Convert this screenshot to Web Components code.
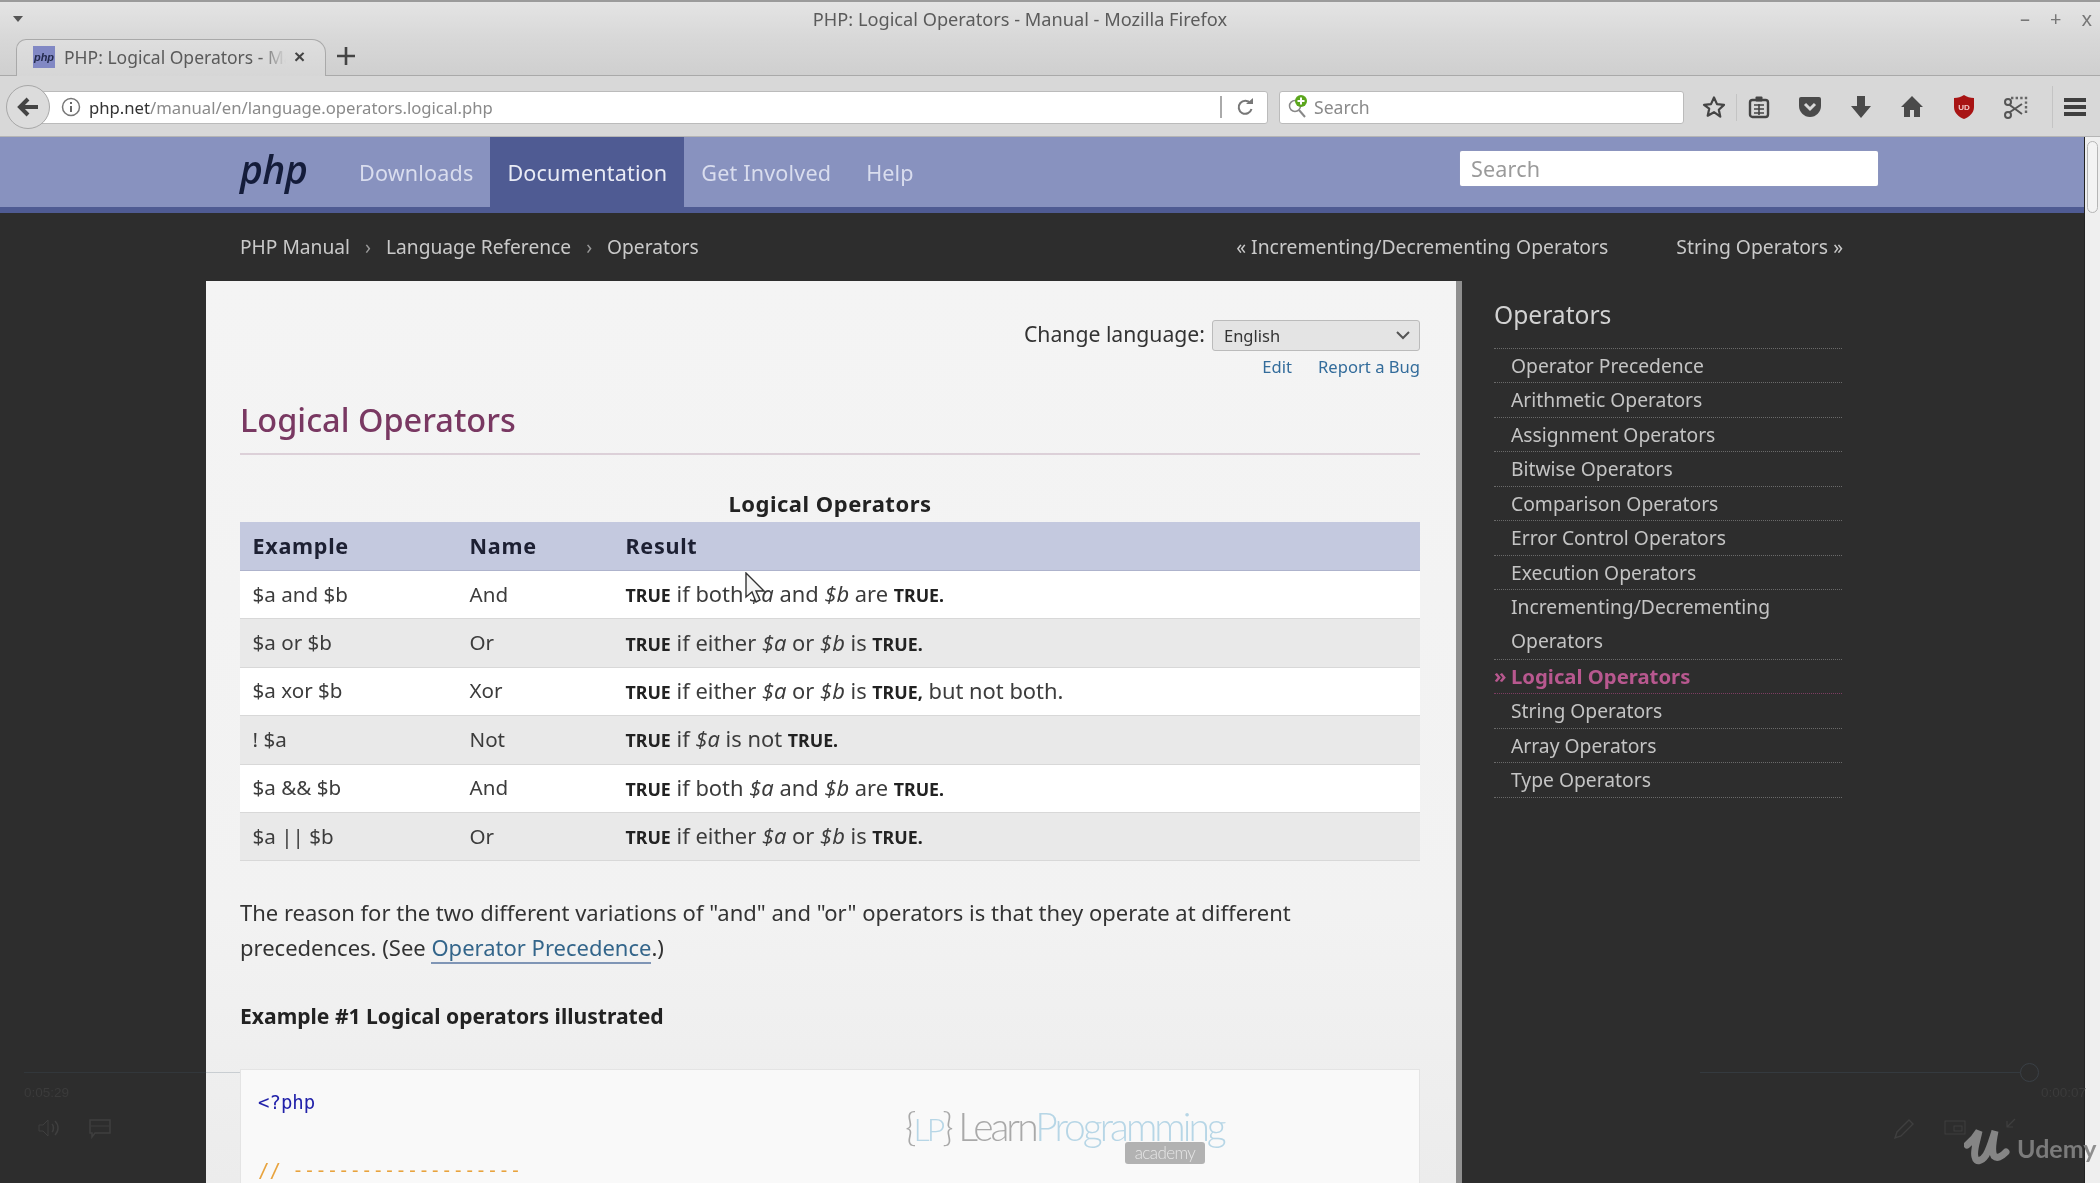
<!DOCTYPE html>
<html><head><meta charset="utf-8"><title>PHP: Logical Operators - Manual</title>
<style>
html,body{margin:0;padding:0;width:2100px;height:1183px;overflow:hidden;background:#2d2d2d}
body{font-family:"Noto Sans","Open Sans",sans-serif;filter:blur(.45px)}
x-row i{font-style:italic}
x-row b{font-weight:700;font-size:17.8px;color:#222}
a.pl{color:#33658a;text-decoration:none;border-bottom:2px solid #7f95b5}
</style></head><body>
<win-chrome></win-chrome>
<page-view>
  <php-nav></php-nav>
  <php-crumbs></php-crumbs>
  <page-main>
    <doc-card>
      <lang-bar></lang-bar>
      <x-heading>Logical Operators</x-heading>
      <op-table>
        <x-row ex="$a and $b" nm="And"><b>TRUE</b> if both <i>$a</i> and <i>$b</i> are <b>TRUE.</b></x-row>
        <x-row ex="$a or $b" nm="Or"><b>TRUE</b> if either <i>$a</i> or <i>$b</i> is <b>TRUE.</b></x-row>
        <x-row ex="$a xor $b" nm="Xor"><b>TRUE</b> if either <i>$a</i> or <i>$b</i> is <b>TRUE,</b> but not both.</x-row>
        <x-row ex="! $a" nm="Not"><b>TRUE</b> if <i>$a</i> is not <b>TRUE.</b></x-row>
        <x-row ex="$a &amp;&amp; $b" nm="And"><b>TRUE</b> if both <i>$a</i> and <i>$b</i> are <b>TRUE.</b></x-row>
        <x-row ex="$a || $b" nm="Or"><b>TRUE</b> if either <i>$a</i> or <i>$b</i> is <b>TRUE.</b></x-row>
      </op-table>
      <x-para>The reason for the two different variations of "and" and "or" operators is that they operate at different<br>precedences. (See <a class="pl" href="#">Operator Precedence</a>.)</x-para>
      <x-example>Example #1 Logical operators illustrated</x-example>
      <code-box></code-box>
    </doc-card>
    <side-bar></side-bar>
  </page-main>
  <x-scroll></x-scroll>
</page-view>
<video-overlay></video-overlay>
<script>
function def(name,css,html,init){
  customElements.define(name,class extends HTMLElement{
    connectedCallback(){
      if(this.shadowRoot)return;
      const s=this.attachShadow({mode:'open'});
      s.innerHTML='<style>'+css+'</style>'+(typeof html==='function'?html(this):html);
    }
  });
}
const ic=(w,h,body,st='')=>`<svg width="${w}" height="${h}" viewBox="0 0 ${w} ${h}" style="display:block;${st}">${body}</svg>`;

def('win-chrome',`
:host{display:block;height:137px;background:#d6d6d6;font-family:"Noto Sans",sans-serif;color:#555;box-sizing:border-box}
.title{height:38px;display:flex;align-items:center;justify-content:center;position:relative;font-size:18.2px;color:#5b5b5b;background:linear-gradient(#e4e4e4,#d8d8d8);border-top:2px solid #9b9b9b;box-sizing:border-box;padding-bottom:3px}
.title span{position:relative;left:-30px}
.drop{position:absolute;left:13px;top:14px;width:0;height:0;border:5px solid transparent;border-top:6px solid #555;border-bottom:0}
.wc{position:absolute;right:0;top:0;bottom:0;display:flex;gap:20px;padding-right:8px;align-items:center;font-size:20px;color:#777;padding-bottom:4px}
.tabs{height:38px;display:flex;align-items:flex-end;background:linear-gradient(#d8d8d8,#cfcfcf);border-bottom:1px solid #a9a9a9;box-sizing:border-box;padding-left:16px}
.tab{width:310px;height:37px;background:linear-gradient(#dedede,#d6d6d6);border:1px solid #a9a9a9;border-bottom:0;border-radius:10px 14px 0 0;box-sizing:border-box;display:flex;align-items:center;padding-left:16px;gap:9px;font-size:17.5px;white-space:nowrap;position:relative;margin-bottom:-1px;padding-bottom:2px}
.fav{width:22px;height:22px;background:#8188c4;color:#232a4d;font:italic 700 11px "Liberation Sans";display:flex;align-items:center;justify-content:center;flex:none}
.tt{width:222px;-webkit-mask-image:linear-gradient(90deg,#000 88%,transparent 100%);mask-image:linear-gradient(90deg,#000 88%,transparent 100%);flex:none;color:#5a5a5a}
.x{font:700 19px "Liberation Sans";color:#444;flex:none;margin-left:-1px}
.plus{margin:0 0 8px 9px;flex:none}
.bar{height:61px;display:flex;align-items:center;position:relative;padding:2px 0 0 35px;box-sizing:border-box;background:#d8d8d8;border-bottom:1px solid #b5b5b5}
.back{position:absolute;left:6px;top:9px;width:44px;height:44px;border-radius:50%;background:#dcdcdc;border:1.5px solid #a7a7a7;box-sizing:border-box;display:flex;align-items:center;justify-content:center;z-index:1}
.url{width:1233px;height:33px;background:#fff;border:1px solid #bbb;border-radius:0 3px 3px 0;box-sizing:border-box;display:flex;align-items:center;font-size:16.7px;color:#8a8a8a;padding-left:25px;flex:none}
.url b{font-weight:400;color:#333}
.info{margin-right:8px;flex:none}
.urlt{flex:1}
.seg{width:47px;height:22px;border-left:2px solid #aaa;display:flex;align-items:center;justify-content:center;box-sizing:border-box;flex:none}
.sb{width:405px;height:33px;background:#fff;border:1px solid #bbb;border-radius:3px;margin-left:11px;box-sizing:border-box;display:flex;align-items:center;font-size:17.6px;color:#8a8a8a;padding-left:6px;gap:0;flex:none}
.icons{display:flex;align-items:center;margin-left:7px;position:relative;flex:none}
.i{width:51px;display:flex;justify-content:center;flex:none}
.sep{width:1px;height:27px;background:#c4c4c4;flex:none}
`,`
<div class="title"><div class="drop"></div><span>PHP: Logical Operators - Manual - Mozilla Firefox</span><div class="wc"><span style="left:0">–</span><span style="left:0">+</span><span style="left:0">x</span></div></div>
<div class="tabs"><div class="tab"><div class="fav">php</div><div class="tt">PHP: Logical Operators - Ma</div><div class="x">×</div></div>
${ic(22,22,'<path d="M11 2v18M2 11h18" stroke="#444" stroke-width="2.6"/>','').replace('<svg','<svg class="plus"')}</div>
<div class="bar"><div class="back">${ic(24,22,'<path d="M22 11H6M12 3l-8 8 8 8" fill="none" stroke="#444" stroke-width="4"/>')}</div>
<div class="url" style="width:1233px"><span class="info">${ic(20,20,'<circle cx="10" cy="10" r="8.5" fill="none" stroke="#777" stroke-width="1.5"/><path d="M10 9v6M10 5v2" stroke="#666" stroke-width="2"/>')}</span><span class="urlt"><b>php.net</b>/manual/en/language.operators.logical.php</span><span class="seg">${ic(18,18,'<path d="M14.5 5.5A6.5 6.5 0 1 0 15.5 11" fill="none" stroke="#777" stroke-width="2"/><path d="M10 6h7V0z" fill="#777"/>')}</span></div>
<div class="sb">${ic(28,26,'<circle cx="9" cy="12" r="5.5" fill="none" stroke="#888" stroke-width="1.5"/><path d="M13 16l6 7" stroke="#888" stroke-width="2"/><circle cx="15" cy="7" r="6" fill="#5ba61d"/><path d="M15 3.5v7M11.5 7h7" stroke="#fff" stroke-width="2"/>')}<span>Search</span></div>
<div class="icons">
<span class="i" style="width:45px">${ic(24,24,'<path d="M12 2.5l3 6.6 7 .8-5.2 4.8 1.5 7L12 17.2l-6.3 3.5 1.5-7L2 9.9l7-.8z" fill="none" stroke="#444" stroke-width="2.2" stroke-linejoin="round"/>')}</span>
<span class="sep"></span>
<span class="i" style="width:44px;margin-right:3px">${ic(22,24,'<rect x="2" y="5" width="18" height="17" rx="2.5" fill="none" stroke="#444" stroke-width="2.4"/><rect x="7.5" y="1.5" width="7" height="5" rx="1" fill="#444"/><path d="M6 10h10M6 14h10M6 18h10M11 9v11" stroke="#444" stroke-width="1.6"/>')}</span>
<span class="i">${ic(24,24,'<path d="M3 2h18a2 2 0 0 1 2 2v7c0 6-5 11-11 11S1 17 1 11V4a2 2 0 0 1 2-2z" fill="#4a4a4a"/><path d="M7 9l5 5 5-5" fill="none" stroke="#d8d8d8" stroke-width="3"/>')}</span>
<span class="i">${ic(22,24,'<path d="M7 1h8v10h6L11 23 1 11h6z" fill="#4a4a4a"/>')}</span>
<span class="i">${ic(24,24,'<path d="M12 1L1 12h3v10h6v-7h4v7h6V12h3z" fill="#4a4a4a"/>')}</span>
<span class="i" style="margin-left:1px">${ic(22,26,'<path d="M11 1c3 2 6 3 10 3v9c0 6-5 10-10 12C6 23 1 19 1 13V4c4 0 7-1 10-3z" fill="#a81414"/><text x="11" y="16" font-size="8" font-weight="700" fill="#f3caca" text-anchor="middle" font-family="Liberation Sans">UD</text>')}</span>
<span class="i" style="margin-left:1px">${ic(24,24,'<path d="M7 3h15v15" fill="none" stroke="#666" stroke-width="2.4" stroke-dasharray="2.4 2.2"/><path d="M3 19L18 9M3 8l15 11" stroke="#555" stroke-width="2"/><circle cx="4" cy="7" r="3" fill="#d8d8d8" stroke="#555" stroke-width="2"/><circle cx="4" cy="20" r="3" fill="#d8d8d8" stroke="#555" stroke-width="2"/>')}</span>
<span class="sep" style="margin-left:11px;height:42px"></span>
<span class="i" style="width:44px">${ic(22,20,'<path d="M0 3h22M0 10h22M0 17h22" stroke="#3f3f3f" stroke-width="4"/>')}</span>
</div></div>`);

def('page-view',`:host{display:block;position:relative;height:1046px;overflow:hidden;padding-right:16px;box-sizing:border-box;background:#2d2d2d}`,`<slot></slot>`);

def('php-nav',`
:host{display:flex;height:76px;background:#8892bf;border-bottom:6px solid #4f5b93;box-sizing:border-box;padding-left:240px;font-size:21.6px;color:#d9ddee;position:relative;width:2100px;letter-spacing:.15px}
.logo{font:italic 600 39px "Open Sans",sans-serif;color:#141c3a;width:120px;line-height:64px;letter-spacing:-.5px;height:70px}
.it{padding:2px 17px 0;height:70px;box-sizing:border-box;display:flex;align-items:center;line-height:1}
.on{background:#4f5b93;color:#e9ebf5}
.s{position:absolute;left:1460px;top:14px;width:418px;height:35px;background:#fff;border-radius:2px;box-sizing:border-box;padding-left:11px;font-size:21.6px;color:#9a9a9a;display:flex;align-items:center;box-shadow:0 0 1px #aab}
`,`<div class="logo">php</div><div class="it" style="padding-left:0;margin-left:-1px">Downloads</div><div class="it on">Documentation</div><div class="it">Get Involved</div><div class="it" style="margin-left:1px">Help</div><div class="s">Search</div>`);

def('php-crumbs',`
:host{display:flex;height:68px;align-items:center;padding:0 241px 1px 240px;font-size:19.2px;color:#c9c9c9;box-sizing:border-box;white-space:nowrap;background:#2d2d2d}
.sp{margin:0 15px;color:#999}
.gap{flex:1}
.r{font-size:19.35px}
`,`<span>PHP Manual</span><span class="sp">›</span><span>Language Reference</span><span class="sp">›</span><span>Operators</span><span class="gap"></span><span class="r">« Incrementing/Decrementing Operators</span><span class="r" style="margin-left:68px">String Operators »</span>`);

def('page-main',`:host{display:flex;padding-left:206px;align-items:flex-start;height:902px;overflow:hidden}`,`<slot></slot>`);

def('doc-card',`:host{display:block;box-sizing:border-box;width:1256px;height:902px;background:linear-gradient(#f4f4f4,#f2f2f2 70%,#ececec);border-right:6px solid #8f8f8f;padding:39px 36px 0 34px;flex:none;color:#333;overflow:hidden}`,`<slot></slot>`);

def('lang-bar',`
:host{display:block;height:73px;font-size:21.2px;color:#333}
.r{display:flex;justify-content:flex-end;align-items:center;height:31px;gap:7px}
.r>span:first-child{position:relative;top:-2px}
.sel{width:208px;height:31px;background:#e4e4e4;border:1px solid #bbb;border-radius:3px;box-sizing:border-box;font-size:16.5px;padding-left:11px;display:flex;align-items:center;justify-content:space-between;padding-right:9px}
.l{display:flex;justify-content:flex-end;gap:26px;font-size:16.6px;color:#336c9b;margin-top:4px;line-height:24px}
`,`<div class="r"><span>Change language:</span><span class="sel">English ${ic(14,9,'<path d="M1 1l6 6 6-6" fill="none" stroke="#555" stroke-width="2"/>')}</span></div><div class="l"><span>Edit</span><span>Report a Bug</span></div>`);

def('x-heading',`
:host{display:block;font-size:32.5px;line-height:44px;color:#793862;font-weight:500;height:55px;padding-top:5px;border-bottom:2px solid #dcd0d8;box-sizing:content-box}
`,`<slot></slot>`);

def('op-table',`
:host{display:block;margin-top:30px;font-size:21.6px}
.c{text-align:center;font-weight:700;line-height:37px;color:#222;font-size:22px;height:37px;letter-spacing:.5px}
.h{display:grid;grid-template-columns:217px 156px 1fr;background:#c4c9df;height:49px;align-items:center;font-weight:700;color:#1d2033;border-bottom:1px solid #aeb3cc;box-sizing:border-box;letter-spacing:.7px;padding-bottom:2px}
.h span{padding-left:12.5px}
`,`<div class="c">Logical Operators</div><div class="h"><span>Example</span><span>Name</span><span>Result</span></div><slot></slot>`);

def('x-row',`
:host{display:grid;grid-template-columns:217px 156px 1fr;height:48.4px;align-items:center;background:#fff;border-bottom:1px solid #d8d8d8;box-sizing:border-box;color:#3c3c3c;font-size:21.9px;white-space:nowrap;padding-bottom:2px}
:host(:nth-of-type(even)){background:#e9e9e9}
span{padding-left:12.5px;font-size:20.6px}
div{padding-left:12.5px}
`,h=>`<span>${h.getAttribute('ex').replace(/&/g,'&amp;')}</span><span>${h.getAttribute('nm')}</span><div><slot></slot></div>`);

def('x-para',`:host{display:block;margin-top:34px;font-size:22px;line-height:34.3px;color:#333;white-space:nowrap}`,`<slot></slot>`);
def('x-example',`:host{display:block;margin-top:35px;font-size:21.1px;line-height:34px;font-weight:700;color:#222}`,`<slot></slot>`);

def('code-box',`
:host{display:block;margin-top:36px;height:200px;background:#f9f9f9;border:1px solid #e4e4e4;box-sizing:border-box;padding:16px 17px;font:19px/32px "DejaVu Sans Mono",monospace;position:relative}
.a{color:#2222aa;height:68px}
.b{color:#e8a33d}
`,`<div class="a">&lt;?php</div><div class="b">// --------------------</div>`);

const items=['Operator Precedence','Arithmetic Operators','Assignment Operators','Bitwise Operators','Comparison Operators','Error Control Operators','Execution Operators','Incrementing/Decrementing Operators','Logical Operators','String Operators','Array Operators','Type Operators'];
def('side-bar',`
:host{display:block;width:348px;margin-left:32px;flex:none;padding-top:16px;color:#c4c4c4;font-size:19.3px}
h3{margin:0;font-size:24.6px;font-weight:400;line-height:36px;color:#d2d2d2;height:52px;box-sizing:border-box;border-bottom:1px dotted #6a6a6a}
div{padding-left:17px;border-bottom:1px dotted #6a6a6a;box-sizing:border-box;position:relative}
div.s{line-height:33.45px}
div.m{line-height:34.3px}
.on{color:#b8588f;font-weight:700;border-bottom-color:#7d3d62;font-size:20.3px}
.on::before{content:"»";position:absolute;left:0;top:-1px}
`,`<h3>Operators</h3>`+items.map(t=>`<div class="s ${t=='Logical Operators'?'on':''}${t.startsWith('Incr')?'m':''}">${t}</div>`).join(''));

def('x-scroll',`
:host{position:absolute;right:0;top:0;bottom:0;width:16px;background:#efefef;border-left:1px solid #222;box-sizing:border-box}
div{position:absolute;left:2px;top:4px;width:11px;height:72px;border:1px solid #b5b5b5;border-radius:7px;background:#f3f3f3;box-sizing:border-box}
`,`<div></div>`);

def('video-overlay',`
:host{position:absolute;left:0;top:0;width:2100px;height:1183px;pointer-events:none;font-family:"Liberation Sans",sans-serif}
.abs{position:absolute}
.lp{left:905px;top:1096px;width:330px;height:72px;font-family:Lato,sans-serif;font-weight:300;font-size:39px;letter-spacing:-3px;color:#a9a9a9;white-space:nowrap;line-height:60px}
.lp .blue{color:#b7d6e6}
.ac{position:absolute;left:220px;top:46px;width:80px;height:22px;background:#b2b2b2;border-radius:3px;color:#e6e6e6;font:300 17px/21px Lato,sans-serif;letter-spacing:-.6px;text-align:center}
.ud{left:2017px;top:1133px;font:700 25px/30px Lato,sans-serif;color:#848484;opacity:.9}
.t{color:#3b3b3b;font-size:13.5px;line-height:18px}
`,`
<svg class="abs" style="left:745px;top:572px" width="20" height="32" viewBox="0 0 20 32"><path d="M1 1v24l6-5 4 10 4-2-4-9h8z" fill="#f4f4f4" stroke="#333" stroke-width="1.4"/></svg>
<div class="abs lp"><span>{</span><span class="blue" style="font-size:32px">LP</span><span>}</span> <span>Learn</span><span class="blue">Programming</span><div class="ac">academy</div></div>
<svg class="abs" style="left:1964px;top:1125px" width="50" height="42" viewBox="0 0 50 42"><path d="M3 20C8 16 12 11 15 6c-2 10-6 20-4 26 1 6 7 4 11-2 4-7 6-15 9-24-2 10-4 20-1 25 3 3 7 1 12-4" fill="none" stroke="#858585" stroke-width="7" stroke-linecap="round"/></svg>
<div class="abs ud">Udemy</div>
<div class="abs" style="left:24px;top:1072px;width:216px;height:1px;background:rgba(70,90,110,.22)"></div>
<div class="abs" style="left:1700px;top:1072px;width:320px;height:1px;background:#343a3f"></div>
<div class="abs" style="left:2020px;top:1063px;width:17px;height:17px;border:1px solid #3a4046;border-radius:50%"></div>
<div class="abs t" style="left:24px;top:1084px">0:05:29</div>
<div class="abs t" style="left:2041px;top:1084px">0:00:07</div>
<svg class="abs" style="left:38px;top:1118px" width="24" height="20" viewBox="0 0 24 20"><path d="M1 7h4l5-5v16l-5-5H1z" fill="none" stroke="#3f3f3f"/><path d="M14 6c2 2 2 6 0 8M17 3c4 4 4 10 0 14" fill="none" stroke="#3f3f3f" stroke-width="1.5"/></svg>
<svg class="abs" style="left:89px;top:1119px" width="22" height="20" viewBox="0 0 22 20"><path d="M1 1h20v13H6l-3 4v-4H1z" fill="none" stroke="#3f3f3f" stroke-width="1.5"/><path d="M2 7h18" stroke="#3f3f3f"/></svg>
<svg class="abs" style="left:1893px;top:1118px" width="22" height="22" viewBox="0 0 22 22"><path d="M2 20l2-6L16 2l4 4L8 18z" fill="none" stroke="#3f3f3f" stroke-width="1.4"/></svg>
<svg class="abs" style="left:1944px;top:1120px" width="22" height="16" viewBox="0 0 22 16"><rect x="1" y="1" width="20" height="13" fill="none" stroke="#3f3f3f"/><rect x="10" y="6" width="8" height="5" fill="none" stroke="#3f3f3f"/></svg>
<svg class="abs" style="left:2002px;top:1118px" width="14" height="12" viewBox="0 0 14 12"><path d="M13 1L5 9M5 3v6h6" fill="none" stroke="#3f3f3f" stroke-width="1.2"/></svg>
`);
</script>
</body></html>
